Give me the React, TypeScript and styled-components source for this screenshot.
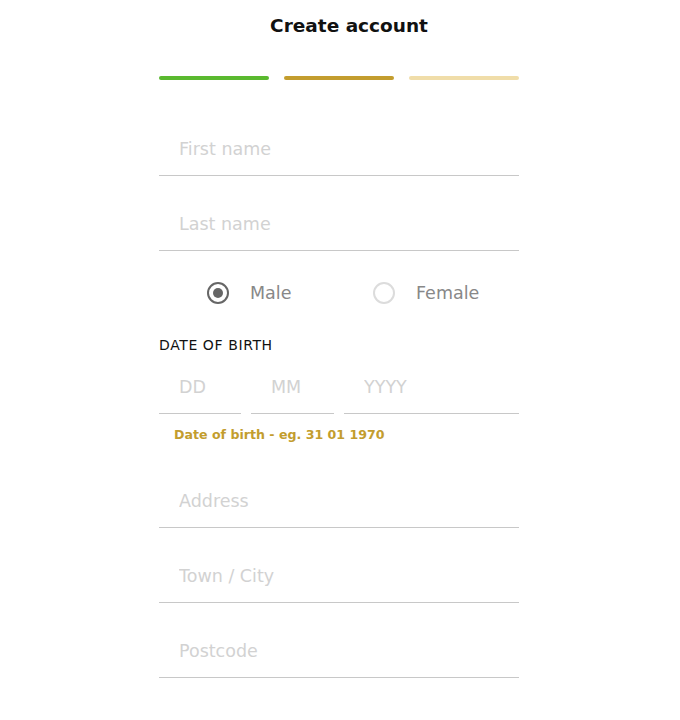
import React, { useState } from "react";
import styled, { createGlobalStyle } from "styled-components";

const GlobalStyle = createGlobalStyle`
  body {
    margin: 0;
    padding-right: 2px;
    background: #fff;
    font-family: "DejaVu Sans", "Noto Sans", sans-serif;
  }
`;

const Page = styled.div`
  width: 360px;
  margin: 0 auto;
  padding-top: 13px;
  display: flex;
  flex-direction: column;
`;

const Title = styled.h1`
  margin: 0;
  padding-left: 20px;
  text-align: center;
  font-size: 18.5px;
  line-height: 26px;
  font-weight: 700;
  color: #111;
`;

const Steps = styled.div`
  display: flex;
  gap: 15px;
  margin-top: 37px;
  margin-bottom: 20px;
`;

const Step = styled.div<{ $color: string }>`
  flex: 1;
  height: 4px;
  border-radius: 2px;
  background: ${({ $color }) => $color};
`;

const Input = styled.input<{ $gap?: number }>`
  display: block;
  box-sizing: border-box;
  width: 100%;
  height: 50px;
  margin-top: ${({ $gap }) => ($gap ?? 25)}px;
  padding: 0 0 4px 20px;
  border: none;
  border-bottom: 1px solid #c8c8c8;
  outline: none;
  font-family: inherit;
  font-size: 17.5px;
  color: #333;
  background: transparent;

  &::placeholder {
    color: #d2d2d2;
  }
`;

const RadioRow = styled.div`
  display: flex;
  height: 40px;
  margin-top: 22px;
  padding-left: 48px;
`;

const RadioOption = styled.label`
  flex: none;
  width: 166px;
  display: flex;
  align-items: center;
  gap: 21px;
  cursor: pointer;
  font-size: 17.5px;
  color: #888;
`;

const RadioDot = styled.span<{ $checked: boolean }>`
  box-sizing: border-box;
  width: 22px;
  height: 22px;
  border-radius: 50%;
  border: 2px solid ${({ $checked }) => ($checked ? "#666" : "#dcdcdc")};
  display: flex;
  align-items: center;
  justify-content: center;

  &::after {
    content: "";
    width: 10px;
    height: 10px;
    border-radius: 50%;
    background: #666;
    display: ${({ $checked }) => ($checked ? "block" : "none")};
  }
`;

const SectionLabel = styled.div`
  margin-top: 24px;
  font-size: 14px;
  line-height: 16px;
  font-weight: 500;
  letter-spacing: 0.6px;
  color: #111;
`;

const DateRow = styled.div`
  display: grid;
  grid-template-columns: 82px 83px 1fr;
  gap: 10px;
  margin-top: 11px;
`;

const Hint = styled.div`
  margin-top: 13px;
  padding-left: 15px;
  font-size: 12.6px;
  line-height: 16px;
  font-weight: 700;
  color: #c39d2e;
`;

export default function App() {
  const [gender, setGender] = useState("male");

  return (
    <>
      <GlobalStyle />
      <Page>
        <Title>Create account</Title>
        <Steps>
          <Step $color="#5ab92f" />
          <Step $color="#c39d2e" />
          <Step $color="#f0dda9" />
        </Steps>

        <Input $gap={26} placeholder="First name" />
        <Input placeholder="Last name" />

        <RadioRow>
          <RadioOption onClick={() => setGender("male")}>
            <RadioDot $checked={gender === "male"} />
            Male
          </RadioOption>
          <RadioOption onClick={() => setGender("female")}>
            <RadioDot $checked={gender === "female"} />
            Female
          </RadioOption>
        </RadioRow>

        <SectionLabel>DATE OF BIRTH</SectionLabel>
        <DateRow>
          <Input $gap={0} placeholder="DD" />
          <Input $gap={0} placeholder="MM" />
          <Input $gap={0} placeholder="YYYY" />
        </DateRow>
        <Hint>Date of birth - eg. 31 01 1970</Hint>

        <Input $gap={35} placeholder="Address" />
        <Input placeholder="Town / City" />
        <Input placeholder="Postcode" />
      </Page>
    </>
  );
}
